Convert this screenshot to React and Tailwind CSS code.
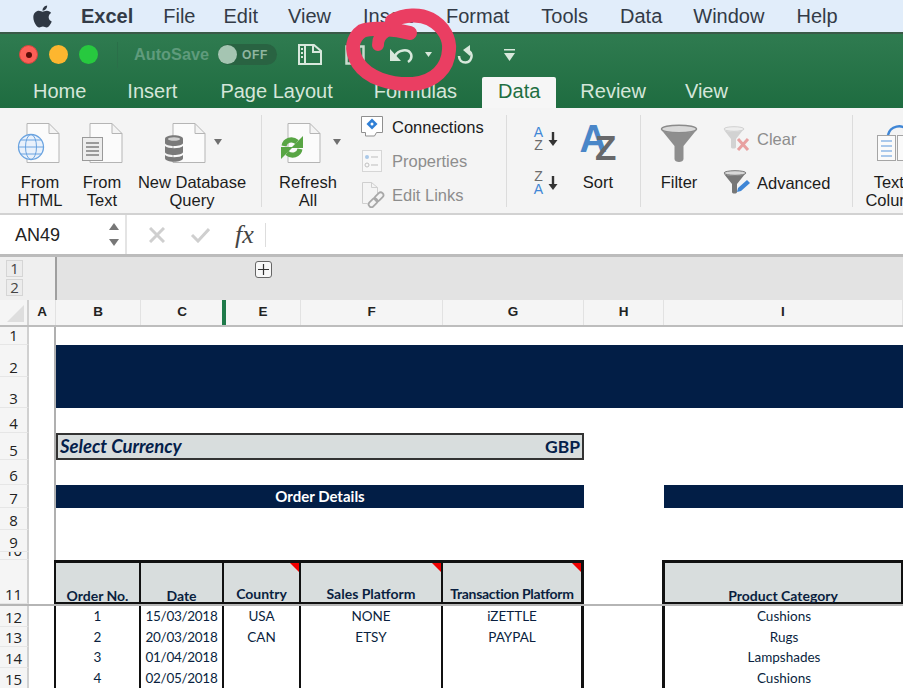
import { FaApple } from 'react-icons/fa';

const COLS = 'grid grid-rows-1 grid-cols-[29px_27px_85px_83px_77px_142px_141px_80px_239px]';

function Doc({ x }) {
  return (
    <path
      d={`M${x} 8.5 h22 l10 10 v29 h-32 z M${x + 22} 8.5 v10 h10`}
      fill="#fbfbfb"
      stroke="#b5b5b5"
    />
  );
}

function Caret({ x, y }) {
  return <path d={`M${x - 4} ${y - 3} h8 l-4 6 z`} fill="#6f6f6f" />;
}

function GlobeIcon() {
  return (
    <svg width="64" height="58" viewBox="0 0 64 58">
      <Doc x={19} />
      <circle cx="23" cy="32" r="12.5" fill="#e9f1fb" stroke="#6aa3e0" strokeWidth="1.3" />
      <ellipse cx="23" cy="32" rx="5.5" ry="12.5" fill="none" stroke="#6aa3e0" />
      <path d="M10.5 32h25M12.5 25h21M12.5 39h21" stroke="#6aa3e0" fill="none" />
    </svg>
  );
}

function TextDocIcon() {
  return (
    <svg width="60" height="58" viewBox="0 0 60 58">
      <Doc x={18} />
      <rect x="10.5" y="22.5" width="20" height="23" fill="#ededed" stroke="#9a9a9a" />
      <path d="M14 28h13M14 32h13M14 36h13M14 40h13" stroke="#808080" strokeWidth="1.3" />
    </svg>
  );
}

function DatabaseIcon() {
  return (
    <svg width="120" height="58" viewBox="0 0 120 58">
      <Doc x={41} />
      <path d="M33 24c0-5 18-5 18 0v4c0 4-18 4-18 0z" fill="#7a7a7a" />
      <path d="M33 31c3 3 15 3 18 0v6c0 4-18 4-18 0z" fill="#7a7a7a" />
      <path d="M33 40c3 3 15 3 18 0v3c0 5-18 5-18 0z" fill="#7a7a7a" />
      <ellipse cx="42" cy="24" rx="6" ry="1.8" fill="#cfcfcf" />
      <Caret x={86} y={27} />
    </svg>
  );
}

function RefreshIcon() {
  return (
    <svg width="80" height="58" viewBox="0 0 80 58">
      <Doc x={20} />
      <path d="M16 31C17 25 24 23 29 27" fill="none" stroke="#58a544" strokeWidth="5" />
      <path d="M35 21V33H23z" fill="#58a544" />
      <path d="M32 34C31 40 24 42 19 38" fill="none" stroke="#58a544" strokeWidth="5" />
      <path d="M13 44V32H25z" fill="#58a544" />
      <Caret x={69} y={27} />
    </svg>
  );
}

function ConnectionsIcon() {
  return (
    <svg width="22" height="22" viewBox="0 0 22 22">
      <path d="M0.500 0.500h21v16h-6l-2 3.500h-9v-3.500h-4z" fill="#fff" stroke="#8f8f8f" />
      <path d="M11 2.500l5.500 5.500-5.500 5.500-5.500-5.500z" fill="#2f7fd6" />
      <circle cx="11" cy="8" r="1.500" fill="#fff" />
    </svg>
  );
}

function PropertiesIcon() {
  return (
    <svg width="22" height="22" viewBox="0 0 22 22">
      <rect x="1.5" y="0.5" width="19" height="21" fill="#f8f8f8" stroke="#d6d6d6" />
      <circle cx="6" cy="7" r="2" fill="#a9c8e8" />
      <circle cx="6" cy="15" r="2" fill="none" stroke="#c0c0c0" />
      <path d="M10 7h7M10 15h7" stroke="#bdbdbd" />
    </svg>
  );
}

function EditLinksIcon() {
  return (
    <svg width="24" height="26" viewBox="0 0 24 26">
      <path d="M1.500 0.500h9l6 5v6M1.500 0.500v21h5M10.500 0.500v5h6" fill="none" stroke="#cfcfcf" />
      <g fill="none" stroke="#a8a8a8" strokeWidth="1.800">
        <rect x="7" y="18" width="10" height="5.500" rx="2.700" transform="rotate(-45 12 20.700)" />
        <rect x="13" y="12" width="10" height="5.500" rx="2.700" transform="rotate(-45 18 14.700)" />
      </g>
    </svg>
  );
}

function SmallSort({ top, bottom, topClass, bottomClass }) {
  return (
    <div className="flex h-[44px] items-center gap-[3px]">
      <div className="flex w-[13px] flex-col items-center font-['Liberation_Sans',sans-serif] text-[14px] leading-[13px]">
        <span className={topClass}>{top}</span>
        <span className={bottomClass}>{bottom}</span>
      </div>
      <svg width="10" height="16" viewBox="0 0 10 16">
        <path d="M5 1v9" stroke="#333" strokeWidth="2.4" />
        <path d="M0.5 9h9l-4.500 6z" fill="#333" />
      </svg>
    </div>
  );
}

function FunnelIcon() {
  return (
    <svg width="58" height="58" viewBox="0 0 58 58">
      <ellipse cx="29" cy="14" rx="17.500" ry="3.800" fill="#d9d9d9" stroke="#8b8b8b" strokeWidth="1.500" />
      <path d="M11.500 15l13 16v13c0 4 9 4 9 0v-13l13-16c-4 4-31 4-35 0z" fill="#8e8e8e" />
    </svg>
  );
}

function ClearIcon() {
  return (
    <svg width="28" height="27" viewBox="0 0 28 27">
      <ellipse cx="11" cy="3" rx="10" ry="2.300" fill="#eee" stroke="#d0d0d0" />
      <path d="M1 4l7 9v8c0 2 5 2 5 0v-8l7-9c-3 2-16 2-19 0z" fill="#d2d2d2" />
      <path d="M15 13l10 11M25 13l-10 11" stroke="#e8a0a0" strokeWidth="3" />
    </svg>
  );
}

function AdvancedIcon() {
  return (
    <svg width="28" height="27" viewBox="0 0 28 27">
      <ellipse cx="12" cy="3" rx="11" ry="2.300" fill="#d8d8d8" stroke="#777" />
      <path d="M1 4l8 10v8c0 2 5 2 5 0v-8l8-10c-3 2-18 2-21 0z" fill="#777" />
      <path d="M14 22l1-4 9-8 3 3-9 8z" fill="#3f86d6" />
    </svg>
  );
}

function TextColumnsIcon() {
  return (
    <svg width="80" height="58" viewBox="0 0 80 58">
      <path d="M30 20c2-9 14-12 20-4" fill="none" stroke="#3f86d6" strokeWidth="2.500" />
      <rect x="19.500" y="20.500" width="18" height="25" fill="#fafafa" stroke="#a5a5a5" />
      <path d="M23 26h11M23 31h11M23 36h11M23 41h11" stroke="#8fb8e6" strokeWidth="1.300" />
      <rect x="39.500" y="20.500" width="22" height="25" fill="#fafafa" stroke="#a5a5a5" />
    </svg>
  );
}

function BigButton({ className, icon, lines }) {
  return (
    <div className={`flex shrink-0 flex-col items-center ${className}`}>
      <div className="h-[58px]">{icon}</div>
      {lines.map((l) => (
        <div key={l} className="whitespace-nowrap text-[16.500px] leading-[18px] text-[#1c1c1c]">
          {l}
        </div>
      ))}
    </div>
  );
}

function RibbonDivider({ className }) {
  return <div className={`h-[92px] w-px shrink-0 bg-[#dcdcdc] ${className}`} />;
}

function Ribbon() {
  return (
    <div className="flex h-[105px] overflow-hidden bg-[#f4f4f4] pt-[7px] pl-[8px] font-['Liberation_Sans',sans-serif]">
      <BigButton className="w-[64px]" icon={<GlobeIcon />} lines={['From', 'HTML']} />
      <BigButton className="w-[60px]" icon={<TextDocIcon />} lines={['From', 'Text']} />
      <BigButton className="w-[120px]" icon={<DatabaseIcon />} lines={['New Database', 'Query']} />
      <RibbonDivider className="ml-[9px]" />
      <BigButton className="ml-[6px] w-[80px]" icon={<RefreshIcon />} lines={['Refresh', 'All']} />
      <div className="-mt-[5px] ml-[13px] flex w-[144px] shrink-0 flex-col text-[16.500px]">
        <div className="flex h-[34px] items-center gap-[9px] text-[#1c1c1c]">
          <ConnectionsIcon />
          Connections
        </div>
        <div className="flex h-[34px] items-center gap-[9px] text-[#8d8d8d]">
          <PropertiesIcon />
          Properties
        </div>
        <div className="flex h-[34px] items-center gap-[7px] text-[#8d8d8d]">
          <EditLinksIcon />
          Edit Links
        </div>
      </div>
      <RibbonDivider className="ml-px" />
      <div className="ml-[25px] flex w-[39px] shrink-0 flex-col pt-[2px]">
        <SmallSort top="A" bottom="Z" topClass="text-[#3f86d6]" bottomClass="text-[#6b6b6b]" />
        <SmallSort top="Z" bottom="A" topClass="text-[#6b6b6b]" bottomClass="text-[#3f86d6]" />
      </div>
      <div className="flex w-[54px] shrink-0 flex-col items-center">
        <div className="flex h-[58px] items-start font-bold">
          <span className="mt-[5px] text-[38px] leading-[38px] text-[#4a86c8]">A</span>
          <span className="mt-[15px] -ml-[12px] text-[35px] leading-[35px] text-[#68686a]">Z</span>
        </div>
        <div className="text-[16.500px] leading-[18px] text-[#1c1c1c]">Sort</div>
      </div>
      <RibbonDivider className="ml-[15px]" />
      <BigButton className="ml-[9px] w-[58px]" icon={<FunnelIcon />} lines={['Filter']} />
      <div className="ml-[15px] flex w-[129px] shrink-0 flex-col pt-[2px] text-[16.500px]">
        <div className="flex h-[44px] items-center gap-[6px] text-[#8d8d8d]">
          <ClearIcon />
          Clear
        </div>
        <div className="flex h-[44px] items-center gap-[6px] text-[#1c1c1c]">
          <AdvancedIcon />
          Advanced
        </div>
      </div>
      <RibbonDivider />
      <BigButton className="ml-[5px] w-[80px]" icon={<TextColumnsIcon />} lines={['Text to', 'Columns']} />
    </div>
  );
}

function TitleBar() {
  return (
    <div className="flex h-[42px] items-center pb-[1px] pl-[19px]">
      <div className="flex gap-[11px]">
        <div className="flex h-[19px] w-[19px] items-center justify-center rounded-full border border-[#d9453d] bg-[#fc5f57]">
          <div className="h-[6px] w-[6px] rounded-full bg-[#5a0c08]" />
        </div>
        <div className="h-[19px] w-[19px] rounded-full bg-[#fdb62f]" />
        <div className="h-[19px] w-[19px] rounded-full bg-[#27c93f]" />
      </div>
      <div className="ml-[19px] h-[26px] w-px bg-[#2a6f49]" />
      <span className="ml-[16px] text-[16.300px] font-bold text-[#5f9b7c]">AutoSave</span>
      <div className="ml-[9px] flex h-[21px] w-[59px] items-center rounded-full bg-[#296342]">
        <div className="h-[19px] w-[19px] rounded-full bg-[#a5c5b2]" />
        <span className="ml-[5px] text-[12px] font-bold tracking-wider text-[#8fb6a0]">OFF</span>
      </div>
      <svg className="ml-[21px]" width="24" height="21" viewBox="0 0 24 21">
        <path d="M1 1h15l7 6v13H1zM7 1v19M15 1v7h8" fill="none" stroke="#d8e8dc" strokeWidth="2" />
        <path d="M3 5h2M3 9h2M3 13h2" stroke="#d8e8dc" strokeWidth="2" />
      </svg>
      <svg className="ml-[23px]" width="20" height="20" viewBox="0 0 20 20">
        <path d="M1.500 1.500h17v17h-17zM6 2v6h8V2M6 18v-6h8v6" fill="none" stroke="#c7dccd" strokeWidth="2.500" />
      </svg>
      <svg className="ml-[25px]" width="23" height="16" viewBox="0 0 23 16">
        <path d="M0 2v12h11z" fill="#d8e8dc" />
        <path d="M5 9c3-6 13-8 16-2 1 3 0 6-3 8" fill="none" stroke="#d8e8dc" strokeWidth="2.500" />
      </svg>
      <svg className="ml-[12px]" width="7" height="5" viewBox="0 0 7 5">
        <path d="M0 0h7l-3.500 5z" fill="#d8e8dc" />
      </svg>
      <svg className="ml-[25px]" width="16" height="19" viewBox="0 0 16 19">
        <path d="M2 11C2 15 5 17.500 8.500 17.500 13 17.500 15 13 14.500 10 14 7 12 5.500 9 5.500" fill="none" stroke="#d8e8dc" strokeWidth="2.500" />
        <path d="M13 0v11L6 5z" fill="#d8e8dc" />
      </svg>
      <svg className="ml-[31px]" width="11" height="12" viewBox="0 0 11 12">
        <path d="M0 0h11v1.500H0zM0 4h11l-5.500 8z" fill="#d8e8dc" />
      </svg>
    </div>
  );
}

function Toolbar() {
  const tabs = [
    { label: 'Home', cls: '' },
    { label: 'Insert', cls: '' },
    { label: 'Page Layout', cls: 'ml-[2px]' },
    { label: 'Formulas', cls: '' },
    { label: 'Review', cls: '-ml-[1px]' },
    { label: 'View', cls: '-ml-[2px]' },
  ];
  return (
    <div className="h-[74px] bg-gradient-to-b from-[#2f7b50] to-[#1e6c40] font-['Liberation_Sans',sans-serif]">
      <TitleBar />
      <div className="flex h-[32px] items-end gap-[41px] pl-[33px] text-[20px] text-[#d5e6da]">
        {tabs.slice(0, 4).map((t) => (
          <div key={t.label} className={`h-[29px] leading-[24px] ${t.cls}`}>{t.label}</div>
        ))}
        <div className="-mx-[16px] h-[31px] rounded-t-[2px] bg-[#f6f6f6] px-[16px] leading-[28px] text-[#1f6f42]">
          Data
        </div>
        {tabs.slice(4).map((t) => (
          <div key={t.label} className={`h-[29px] leading-[24px] ${t.cls}`}>{t.label}</div>
        ))}
      </div>
    </div>
  );
}

function FormulaBar() {
  return (
    <div className="flex h-[44px] border-t-2 border-b-[3px] border-t-[#d2d2d2] border-b-[#bcbcbc] bg-white font-['Liberation_Sans',sans-serif]">
      <div className="flex w-[127px] items-center justify-between border-r-2 border-[#e4e4e4] pr-[6px] pl-[15px] text-[18px] text-[#222]">
        <span className="mt-[2px]">AN49</span>
        <div className="flex flex-col gap-[9px]">
          <div className="h-0 w-0 border-x-[5px] border-b-[7px] border-x-transparent border-b-[#777]" />
          <div className="h-0 w-0 border-x-[5px] border-t-[7px] border-x-transparent border-t-[#777]" />
        </div>
      </div>
      <div className="flex items-center">
        <svg className="ml-[22px]" width="16" height="16" viewBox="0 0 16 16">
          <path d="M1 1l14 14M15 1L1 15" stroke="#cfcfcf" strokeWidth="3" />
        </svg>
        <svg className="ml-[25px]" width="20" height="16" viewBox="0 0 20 16">
          <path d="M2 8l6 6L19 2" fill="none" stroke="#cfcfcf" strokeWidth="3" />
        </svg>
        <span className="ml-[25px] font-['Liberation_Serif',serif] text-[26px] italic text-[#444]">fx</span>
        <div className="ml-[11px] h-[24px] w-px bg-[#ddd]" />
      </div>
    </div>
  );
}

function OutlineBar() {
  return (
    <div className="flex h-[43px] bg-[#e3e3e3] font-['Open_Sans',sans-serif]">
      <div className="flex w-[57px] flex-col gap-[2px] border-r-2 border-[#9f9f9f] bg-[#efefef] pt-[3px] pl-[6px]">
        {['1', '2'].map((n) => (
          <div
            key={n}
            className="flex h-[17px] w-[17px] items-center justify-center border border-[#d5d5d5] bg-[#ececec] text-[15px] text-[#444]"
          >
            {n}
          </div>
        ))}
      </div>
      <div className="ml-[198px] mt-[4px] flex h-[17px] w-[17px] items-center justify-center rounded-[3px] border border-[#666] bg-[#f8f8f8]">
        <svg width="11" height="11" viewBox="0 0 11 11">
          <path d="M5.500 0v11M0 5.500h11" stroke="#333" strokeWidth="1.200" />
        </svg>
      </div>
    </div>
  );
}

function ColumnHeaders() {
  const letters = ['A', 'B', 'C', 'E', 'F', 'G', 'H', 'I'];
  return (
    <div className={`${COLS} h-[27px] border-b-2 border-[#bdbdbd] bg-[#f5f5f5] font-['Liberation_Sans',sans-serif] text-[13.500px] font-bold text-[#222]`}>
      <div className="flex items-end justify-end border-r-2 border-[#d0d0d0] pr-[3px] pb-[3px]">
        <div className="h-0 w-0 border-b-[17px] border-l-[17px] border-b-[#dedede] border-l-transparent" />
      </div>
      {letters.map((l) => (
        <div
          key={l}
          className={`flex items-center justify-center border-r border-[#e2e2e2] ${l === 'E' ? '-ml-[2px] border-l-4 border-l-[#1f7a4a]' : ''}`}
        >
          {l}
        </div>
      ))}
    </div>
  );
}

function Row({ h, num, aCell = 'border-r-2 border-[#b0b0b0]', children, className = '' }) {
  return (
    <div className={`${COLS} ${h} ${className}`}>
      <div className="flex items-end justify-center overflow-hidden border-r-2 border-b border-r-[#d0d0d0] border-b-[#e6e6e6] bg-[#f5f5f5] font-['Open_Sans',sans-serif] text-[15px] leading-[18px] font-medium text-[#222]">
        <span className="shrink-0">{num}</span>
      </div>
      <div className={aCell} />
      {children}
    </div>
  );
}

function Flag() {
  return <div className="absolute top-0 right-0 h-0 w-0 border-t-[9px] border-l-[9px] border-t-[#f00000] border-l-transparent" />;
}

function HeadCell({ label, flag, className = '', textClass = '' }) {
  return (
    <div className={`relative flex items-end justify-center border-t-[3px] border-r-2 border-b-2 border-[#111] bg-[#d8dddd] leading-[12px] whitespace-nowrap ${textClass} ${className}`}>
      {flag && <Flag />}
      {label}
    </div>
  );
}

const orders = [
  { h: 'h-[21px]', num: 12, cells: ['1', '15/03/2018', 'USA', 'NONE', 'iZETTLE'], cat: 'Cushions' },
  { h: 'h-[20px]', num: 13, cells: ['2', '20/03/2018', 'CAN', 'ETSY', 'PAYPAL'], cat: 'Rugs' },
  { h: 'h-[21px]', num: 14, cells: ['3', '01/04/2018', '', '', ''], cat: 'Lampshades' },
  { h: 'h-[21px]', num: 15, cells: ['4', '02/05/2018', '', '', ''], cat: 'Cushions' },
];

function Sheet() {
  const tableA = 'border-r-2 border-[#111]';
  return (
    <div className="font-['Lato',sans-serif] text-[#0a1f40]">
      <Row h="h-[18px]" num="1" />
      <Row h="h-[32px]" num="2">
        <div className="col-span-7 bg-[#021e46]" />
      </Row>
      <Row h="h-[31px]" num="3">
        <div className="col-span-7 bg-[#021e46]" />
      </Row>
      <Row h="h-[25px]" num="4" />
      <Row h="h-[27px]" num="5">
        <div className="col-span-5 flex items-center justify-between border-2 border-[#333] bg-[#d8dddd] px-[2px] leading-none font-bold text-[#04204a]">
          <span className="text-[18.500px] italic">Select Currency</span>
          <span className="text-[17.500px]">GBP</span>
        </div>
      </Row>
      <Row h="h-[25px]" num="6" />
      <Row h="h-[23px]" num="7">
        <div className="col-span-5 flex items-center justify-center bg-[#021e46] text-[15px] font-bold text-white">
          Order Details
        </div>
        <div />
        <div className="bg-[#021e46]" />
      </Row>
      <Row h="h-[22px]" num="8" />
      <Row h="h-[22px]" num="9" />
      <Row h="h-[8px]" num="10" />
      <Row h="h-[46px]" num="11" aCell={tableA} className="border-b-2 border-[#b5b5b5] text-[14px] font-bold">
        <HeadCell label="Order No." />
        <HeadCell label="Date" />
        <HeadCell label="Country" flag textClass="pb-[2px]" />
        <HeadCell label="Sales Platform" flag textClass="pb-[2px]" />
        <HeadCell label="Transaction Platform" flag textClass="pb-[2px]" className="border-r-[3px] tracking-[-0.300px]" />
        <div />
        <HeadCell label="Product Category" className="-ml-[2px] border-x-[3px]" />
      </Row>
      {orders.map((o) => (
        <Row key={o.num} h={o.h} num={o.num} aCell={tableA} className="text-[13.500px]">
          {o.cells.map((c, i) => (
            <div
              key={i}
              className={`flex items-center justify-center border-[#111] ${i === 4 ? 'border-r-[3px]' : 'border-r-2'} ${i === 1 ? 'tracking-[-0.300px]' : ''}`}
            >
              {c}
            </div>
          ))}
          <div />
          <div className="-ml-[2px] flex items-center justify-center border-l-[3px] border-[#111]">{o.cat}</div>
        </Row>
      ))}
    </div>
  );
}

export default function App() {
  const menus = [
    { label: 'File', cls: 'ml-[30px]' },
    { label: 'Edit', cls: 'ml-[28px]' },
    { label: 'View', cls: 'ml-[30px]' },
    { label: 'Insert', cls: 'ml-[32px]' },
    { label: 'Format', cls: 'ml-[33px]' },
    { label: 'Tools', cls: 'ml-[32px]' },
    { label: 'Data', cls: 'ml-[32px]' },
    { label: 'Window', cls: 'ml-[31px]' },
    { label: 'Help', cls: 'ml-[32px]' },
  ];
  return (
    <div className="relative h-[688px] w-[903px] overflow-hidden bg-white">
      <div className="flex h-[34px] items-center border-b-2 border-[#3a5a48] bg-[#e1edfa] pl-[30px] font-['Liberation_Sans',sans-serif] text-[20px] text-[#333b47]">
        <FaApple className="text-[25px] text-[#2f3844]" />
        <div className="ml-[26px] flex">
          <span className="font-bold">Excel</span>
          {menus.map((m) => (
            <span key={m.label} className={m.cls}>{m.label}</span>
          ))}
        </div>
      </div>
      <Toolbar />
      <Ribbon />
      <FormulaBar />
      <OutlineBar />
      <ColumnHeaders />
      <Sheet />
      <svg className="absolute top-0 left-0" width="903" height="120" viewBox="0 0 903 120">
        <g fill="none" stroke="#ea3e62" strokeLinecap="round">
          <path strokeWidth="14" d="M392 21C405 14 420 14 430 19C445 27 450 40 449 50C448 68 435 82 413 84C390 85 368 78 358 63C350 50 352 38 362 31C372 27 395 29 410 33" />
          <path strokeWidth="12" d="M378 45C378 40 380 35 385 32" />
        </g>
      </svg>
    </div>
  );
}
